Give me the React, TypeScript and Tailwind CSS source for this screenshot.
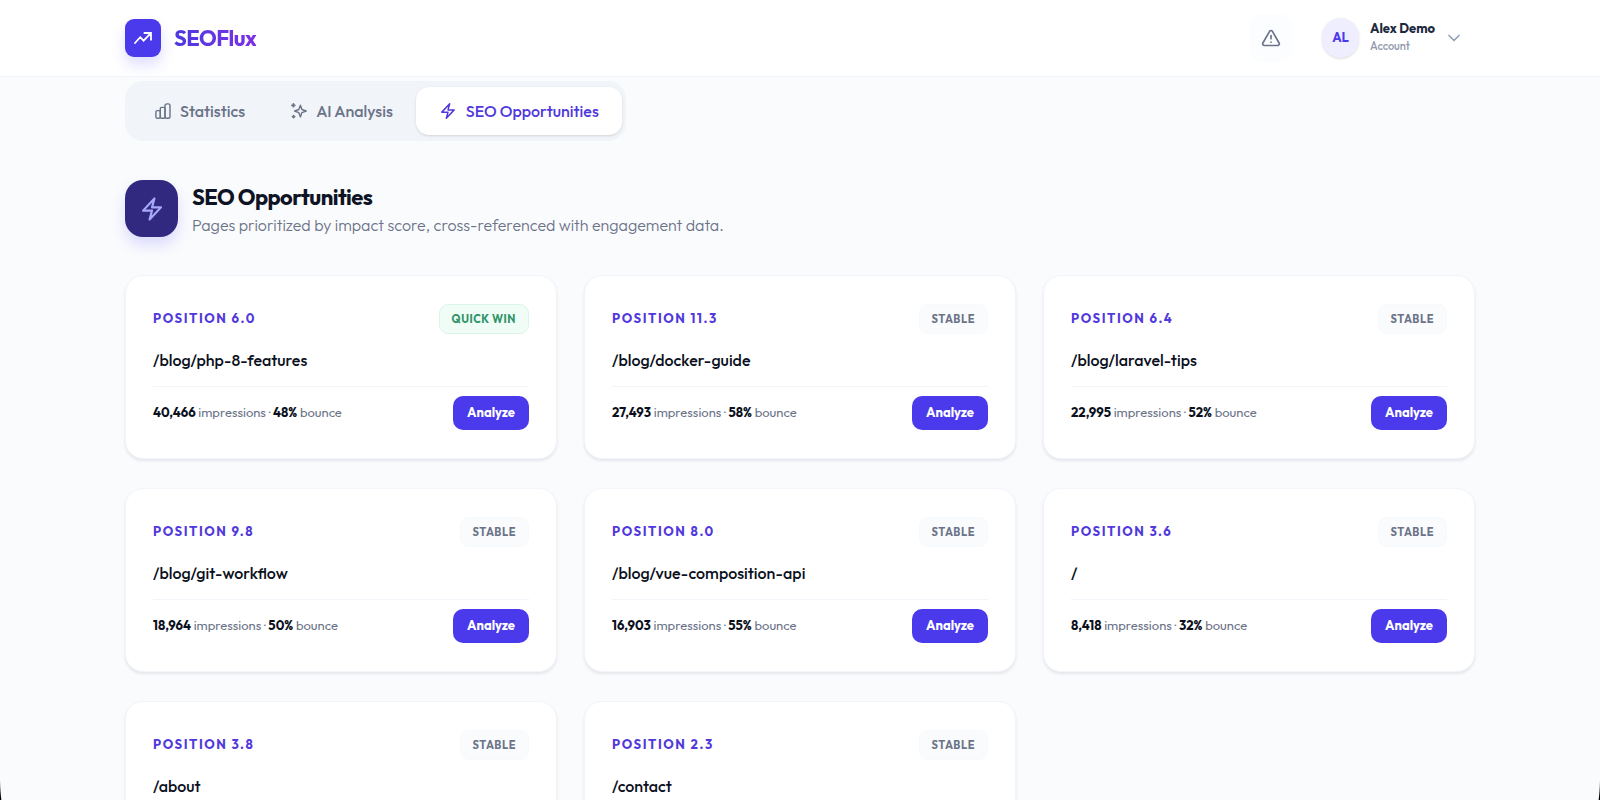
import { useState } from "react";
import { clsx } from "clsx";
import { HiOutlineBolt } from "react-icons/hi2";
import { ChevronDown, TriangleAlert } from "lucide-react";

type Page = {
    path: string;
    position: string;
    impressions?: string;
    bounce?: string;
    quickWin?: boolean;
}

const pages: Page[] = [
    { path: "/blog/php-8-features", position: "6.0", impressions: "40,466", bounce: "48%", quickWin: true },
    { path: "/blog/docker-guide", position: "11.3", impressions: "27,493", bounce: "58%" },
    { path: "/blog/laravel-tips", position: "6.4", impressions: "22,995", bounce: "52%" },
    { path: "/blog/git-workflow", position: "9.8", impressions: "18,964", bounce: "50%" },
    { path: "/blog/vue-composition-api", position: "8.0", impressions: "16,903", bounce: "55%" },
    { path: "/", position: "3.6", impressions: "8,418", bounce: "32%" },
    { path: "/about", position: "3.8" },
    { path: "/contact", position: "2.3" },
];

function TrendIcon() {
    return (
        <svg className="h-3 w-[18px]" viewBox="0 0 18 12" fill="none" stroke="currentColor" strokeWidth="1.8" strokeLinecap="round">
            <path d="M1 11L6.2 5.2L9.6 8.6L16.6 1.4M10.4 1H17V7.8" />
        </svg>
    )
}

function BarsIcon() {
    return (
        <svg className="size-4" viewBox="0 0 16 16" fill="none" stroke="currentColor" strokeWidth="1.4">
            <rect x="0.9" y="7.6" width="4.4" height="7.6" rx="1.3" />
            <rect x="5.3" y="4.4" width="4.7" height="10.8" rx="1.3" />
            <rect x="10" y="0.9" width="5" height="14.3" rx="1.8" />
        </svg>
    )
}

function SparkIcon() {
    return (
        <svg className="size-4" viewBox="0 0 16 16" fill="none" stroke="currentColor" strokeWidth="1.4" strokeLinejoin="round" strokeLinecap="round">
            <path d="M9.4 2.2L10.9 6.5L15.2 8L10.9 9.6L9.4 13.9L7.8 9.6L3.6 8L7.8 6.5Z" />
            <path d="M2.4 0.9V3.7M1 2.3H3.8M2.6 12.6V14.6M1.6 13.6H3.6" strokeWidth="1.8" />
        </svg>
    )
}

function BoltIcon() {
    return <HiOutlineBolt className="size-[18px]" strokeWidth={2} />
}

const tabs = [
    { id: "statistics", label: "Statistics", icon: BarsIcon },
    { id: "ai", label: "AI Analysis", icon: SparkIcon },
    { id: "seo", label: "SEO Opportunities", icon: BoltIcon },
];

function Header() {
    return (
        <header className="border-b border-slate-100 bg-white">
            <div className="mx-auto flex h-[76px] w-27/32 items-center justify-between">
                <a href="#" className="flex items-center gap-[13px]">
                    <span className="flex h-[38px] w-9 items-center justify-center rounded-[9px] bg-[#4b39ec] text-white shadow-[0_8px_14px_rgba(99,90,255,0.2)]">
                        <TrendIcon />
                    </span>
                    <span className="bg-linear-to-r from-[#4b39e0] to-[#7c2ee6] bg-clip-text text-[22px] leading-8 font-bold tracking-tight text-transparent">SEOFlux</span>
                </a>
                <div className="flex items-center gap-[30px]">
                    <button aria-label="Alerts" className="flex h-12 w-[42px] items-center justify-center rounded-xl bg-[#fcfdfe] text-[#6b7388]">
                        <TriangleAlert className="size-5" />
                    </button>
                    <button className="flex items-center pr-[11px] text-left">
                        <span className="flex h-10 w-[37px] items-center justify-center rounded-full bg-[#eeeefe] text-[13px] font-bold text-[#4b39ec] shadow-sm">AL</span>
                        <span className="ml-[11px] flex flex-col pb-1">
                            <span className="text-[13px] leading-5 font-bold text-slate-800">Alex Demo</span>
                            <span className="text-[11px] leading-4 font-medium text-[#9299ae]">Account</span>
                        </span>
                        <ChevronDown className="ml-[9px] size-5 text-slate-400" />
                    </button>
                </div>
            </div>
        </header>
    )
}

function PageCard({ page }: { page: Page }) {
    return (
        <article className="rounded-[18px] border border-slate-100 bg-white px-[27px] py-7 shadow-[0_2px_3px_rgba(15,23,42,0.09)]">
            <div className="flex h-[30px] items-center justify-between">
                <span className="text-[13px] font-bold tracking-[0.12em] text-[#5139dc]">POSITION {page.position}</span>
                <span className={clsx("flex h-full items-center rounded-[9px] border px-3 text-[11px] font-bold tracking-wider", page.quickWin ? "border-[#dcf5ea] bg-[#effdf6] text-[#2f9468]" : "border-[#f7fafc] bg-[#fafbfd] text-[#6b7388]")}>
                    {page.quickWin ? "QUICK WIN" : "STABLE"}
                </span>
            </div>
            <h3 className="mt-[14px] truncate text-base leading-6 font-medium text-[#0b1020]">{page.path}</h3>
            {page.impressions && (
                <div className="mt-[14px] flex items-center justify-between border-t border-slate-100 pt-[9px]">
                    <p className="text-[13px] text-[#6b7388]">
                        <strong className="font-bold text-[#0b1020]">{page.impressions}</strong> impressions · <strong className="font-bold text-[#0b1020]">{page.bounce}</strong> bounce
                    </p>
                    <button className="h-[34px] rounded-[10px] bg-[#4b39ec] px-[14px] text-[13px] font-bold text-white">Analyze</button>
                </div>
            )}
        </article>
    )
}

export default function App() {
    const [tab, setTab] = useState("seo");

    return (
        <div className="min-h-screen bg-[#fafbfd] font-['Outfit','Lato',sans-serif]">
            <Header />
            <main className="mx-auto w-27/32 pt-1">
                <nav className="flex w-fit rounded-[18px] bg-[#f1f4f8] py-[6px] pr-1 pl-[7px]">
                    {tabs.map(({ id, label, icon: Icon }) => (
                        <button
                            key={id}
                            onClick={() => setTab(id)}
                            className={clsx("flex h-12 items-center gap-[9px] rounded-[13px] px-[23px] text-base font-medium", tab === id ? "bg-white text-[#4f39dc] shadow-sm" : "text-[#6b7388]")}
                        >
                            <Icon />
                            {label}
                        </button>
                    ))}
                </nav>

                <div className="mt-[39px] flex items-center gap-[14px]">
                    <div className="flex h-[57px] w-[53px] items-center justify-center rounded-[18px] bg-[#31297f] text-[#a6a8fa] shadow-[0_8px_14px_rgba(99,90,255,0.2)]">
                        <HiOutlineBolt className="size-[26px]" strokeWidth={2} />
                    </div>
                    <div>
                        <h1 className="text-[22px] leading-8 font-bold tracking-tight text-[#0f1424]">SEO Opportunities</h1>
                        <p className="text-base leading-6 font-light text-[#6b7388]">Pages prioritized by impact score, cross-referenced with engagement data.</p>
                    </div>
                </div>

                <div className="mt-[38px] grid grid-cols-3 gap-x-[27px] gap-y-[29px]">
                    {pages.map((page) => (
                        <PageCard key={page.path} page={page} />
                    ))}
                </div>
            </main>

            {/* rounded window corners */}
            <svg className="fixed bottom-0 left-0 h-5 w-[3px]" viewBox="0 0 3 20"><path d="M0 0Q0.2 12 1.4 20H0Z" /></svg>
            <svg className="fixed right-0 bottom-0 h-5 w-[3px]" viewBox="0 0 3 20"><path d="M3 0Q2.8 12 1.6 20H3Z" /></svg>
        </div>
    )
}
